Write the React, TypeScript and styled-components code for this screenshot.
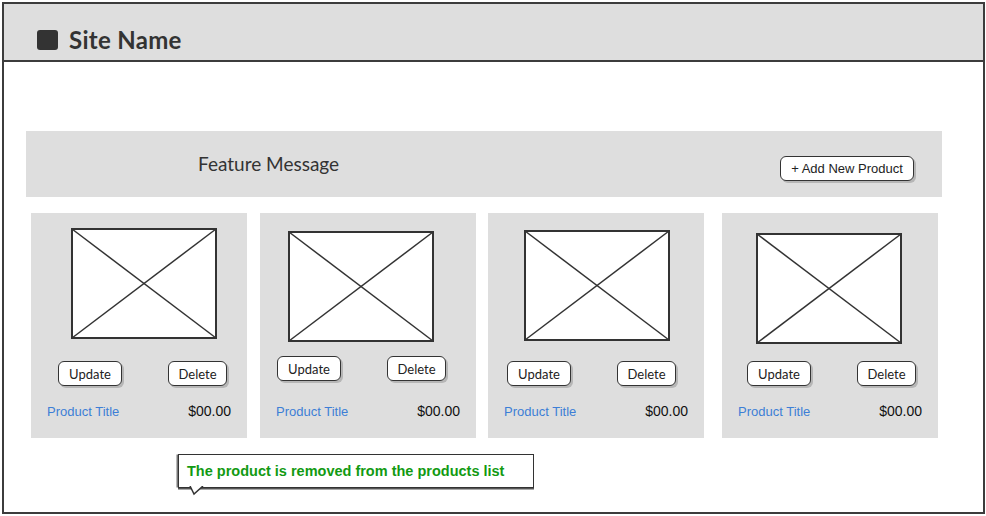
import React from 'react';
import styled, { createGlobalStyle } from 'styled-components';

const GlobalStyle = createGlobalStyle`
  html, body {
    margin: 0;
    padding: 0;
    background: #fff;
  }
  * {
    box-sizing: border-box;
  }
`;

const sketchFont = `Lato, "Noto Sans", sans-serif`;
const plainFont = `"Liberation Sans", Arial, sans-serif`;

const Page = styled.div`
  width: 986px;
  height: 516px;
  padding: 2px 2px 3px 2px;
`;

const Frame = styled.div`
  position: relative;
  width: 983px;
  height: 512px;
  border: 2px solid #3c3c3c;
  display: flex;
  flex-direction: column;
`;

const Header = styled.header`
  height: 58px;
  flex: none;
  background: #dedede;
  border-bottom: 2px solid #3c3c3c;
  display: flex;
  align-items: center;
  gap: 11px;
  padding: 15px 0 0 33px;
`;

const LogoSquare = styled.div`
  width: 21px;
  height: 20px;
  border-radius: 3px;
  background: #333;
`;

const SiteName = styled.h1`
  margin: 0;
  font-family: ${sketchFont};
  font-weight: 700;
  font-size: 24px;
  color: #333;
  letter-spacing: 0.3px;
`;

const Main = styled.main`
  padding: 69px 0 0 22px;
`;

const Banner = styled.section`
  width: 916px;
  height: 66px;
  background: #dedede;
  display: flex;
  align-items: center;
  justify-content: space-between;
  padding: 0 28px 0 172px;
`;

const FeatureMessage = styled.h2`
  margin: 0 0 2px 0;
  font-family: ${sketchFont};
  font-weight: 400;
  font-size: 19px;
  color: #333;
`;

const SketchButton = styled.button<{ $width: number }>`
  width: ${(p) => p.$width}px;
  height: 25px;
  padding: 0;
  background: #fff;
  border: 1.5px solid #333;
  border-radius: 6px;
  box-shadow: 2px 2px 0 rgba(0, 0, 0, 0.18);
  color: #222;
  font-size: 13px;
  cursor: pointer;
`;

const AddButton = styled(SketchButton)`
  margin-top: 9px;
  font-family: ${plainFont};
`;

const CardButton = styled(SketchButton)`
  font-family: ${sketchFont};
`;

const CardRow = styled.div`
  margin: 16px 0 0 5px;
  display: flex;
`;

const Card = styled.article<{ $offset: number }>`
  width: 216px;
  height: 225px;
  margin-left: ${(p) => p.$offset}px;
  background: #dedede;
  display: flex;
  flex-direction: column;
  padding: 0 16px 19px 16px;
`;

const ImageBox = styled.svg<{ $top: number; $left: number }>`
  display: block;
  flex: none;
  margin: ${(p) => p.$top}px 0 0 ${(p) => p.$left - 16}px;
`;

const ButtonRow = styled.div<{ $top: number; $left: number }>`
  display: flex;
  gap: 46px;
  margin-top: ${(p) => p.$top}px;
  margin-left: ${(p) => p.$left - 16}px;
`;

const CardFooter = styled.div`
  margin-top: auto;
  display: flex;
  justify-content: space-between;
  align-items: baseline;
`;

const ProductTitle = styled.a`
  font-family: ${plainFont};
  font-size: 13px;
  color: #3d7ed6;
  text-decoration: none;
`;

const Price = styled.span`
  font-family: ${plainFont};
  font-size: 14px;
  color: #111;
`;

const Toast = styled.div`
  position: absolute;
  left: 174px;
  top: 450px;
  width: 356px;
  height: 34px;
  background: #fff;
  border: 1.5px solid #333;
  box-shadow: 0 1.5px 0 #555, -2px 0 0 -0.5px #777;
  display: flex;
  align-items: center;
  padding: 0 0 1px 8px;
  font-family: ${plainFont};
  font-weight: 700;
  font-size: 14.5px;
  color: #129a12;
`;

const ToastTail = styled.svg`
  position: absolute;
  left: 10px;
  bottom: -9px;
`;

type Product = {
  offset: number;
  imgTop: number;
  imgLeft: number;
  btnGap: number;
  btnLeft: number;
};

const products: Product[] = [
  { offset: 0, imgTop: 15, imgLeft: 40, btnGap: 22, btnLeft: 27 },
  { offset: 13, imgTop: 18, imgLeft: 28, btnGap: 14, btnLeft: 17 },
  { offset: 12, imgTop: 17, imgLeft: 36, btnGap: 20, btnLeft: 19 },
  { offset: 18, imgTop: 20, imgLeft: 34, btnGap: 17, btnLeft: 25 },
];

const Placeholder: React.FC<{ top: number; left: number }> = ({ top, left }) => (
  <ImageBox $top={top} $left={left} width="146" height="111" viewBox="0 0 146 111">
    <rect x="1" y="1" width="144" height="109" fill="#fff" stroke="#333" strokeWidth="2" />
    <line x1="1" y1="1" x2="145" y2="110" stroke="#333" strokeWidth="1.5" />
    <line x1="145" y1="1" x2="1" y2="110" stroke="#333" strokeWidth="1.5" />
  </ImageBox>
);

const ProductCard: React.FC<{ product: Product }> = ({ product }) => (
  <Card $offset={product.offset}>
    <Placeholder top={product.imgTop} left={product.imgLeft} />
    <ButtonRow $top={product.btnGap} $left={product.btnLeft}>
      <CardButton $width={64}>Update</CardButton>
      <CardButton $width={59}>Delete</CardButton>
    </ButtonRow>
    <CardFooter>
      <ProductTitle href="#">Product Title</ProductTitle>
      <Price>$00.00</Price>
    </CardFooter>
  </Card>
);

export default function App() {
  return (
    <>
      <GlobalStyle />
      <Page>
        <Frame>
          <Header>
            <LogoSquare />
            <SiteName>Site Name</SiteName>
          </Header>
          <Main>
            <Banner>
              <FeatureMessage>Feature Message</FeatureMessage>
              <AddButton $width={134}>+ Add New Product</AddButton>
            </Banner>
            <CardRow>
              {products.map((p, i) => (
                <ProductCard key={i} product={p} />
              ))}
            </CardRow>
          </Main>
          <Toast>
            The product is removed from the products list
            <ToastTail width="16" height="10" viewBox="0 0 16 10">
              <path d="M1 0 L5 8 L14 0" fill="#fff" stroke="#333" strokeWidth="1.5" />
            </ToastTail>
          </Toast>
        </Frame>
      </Page>
    </>
  );
}
